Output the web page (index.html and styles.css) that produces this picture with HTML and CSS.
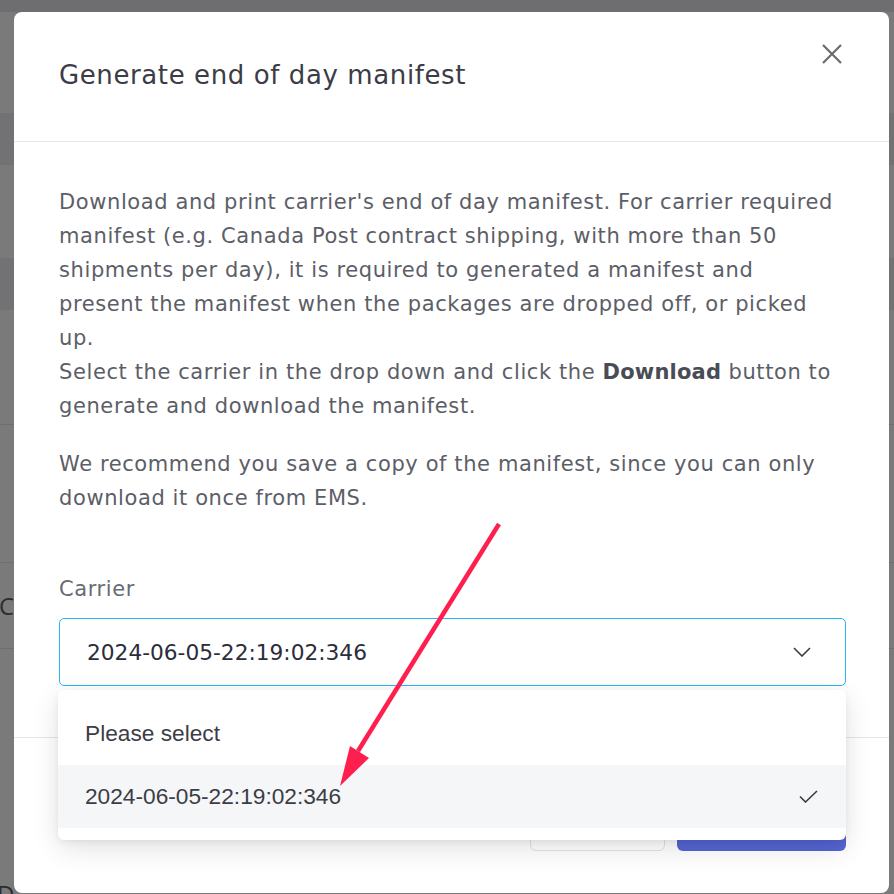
FILE: index.html
```html
<!DOCTYPE html>
<html lang="en">
<head>
    <meta charset="UTF-8">
    <meta name="viewport" content="width=device-width, initial-scale=1.0">
    <title>Generate end of day manifest</title>
    <link rel="stylesheet" href="styles.css">
</head>
<body>
    <div class="backdrop">
        <div class="band band-top"></div>
        <div class="band band-a"></div>
        <div class="band band-dark"></div>
        <div class="band band-b"></div>
        <div class="band band-dark"></div>
        <div class="band band-c line"></div>
        <div class="band band-d line"></div>
        <div class="band band-e line"><span class="peek">C</span></div>
        <div class="band band-f"><span class="peek peek-bottom">D</span></div>
    </div>

    <div class="modal">
        <div class="modal-header">
            <h2 class="modal-title">Generate end of day manifest</h2>
            <button class="modal-close" aria-label="Close">
                <svg width="24" height="24" viewBox="0 0 24 24"><path d="M3 3L21 21M21 3L3 21" stroke="#6b6b6e" stroke-width="2.2" fill="none"/></svg>
            </button>
        </div>

        <div class="modal-body">
            <p>Download and print carrier's end of day manifest. For carrier required manifest (e.g. Canada Post contract shipping, with more than 50 shipments per day), it is required to generated a manifest and present the manifest when the packages are dropped off, or picked up.<br>Select the carrier in the drop down and click the <strong>Download</strong> button to generate and download the manifest.</p>
            <p>We recommend you save a copy of the manifest, since you can only download it once from EMS.</p>

            <div class="field">
                <label class="field-label">Carrier</label>
                <div class="select-wrap">
                    <div class="select">
                        <span class="select-value">2024-06-05-22:19:02:346</span>
                        <svg width="18" height="10" viewBox="0 0 18 10"><path d="M1 1L9 9L17 1" stroke="#3a3b45" stroke-width="1.6" fill="none"/></svg>
                    </div>
                    <ul class="dropdown">
                        <li class="option">Please select</li>
                        <li class="option selected">
                            <span>2024-06-05-22:19:02:346</span>
                            <svg width="19" height="13" viewBox="0 0 19 13"><path d="M1 6.5L6.5 12L18 1" stroke="#3a3b45" stroke-width="1.6" fill="none"/></svg>
                        </li>
                    </ul>
                </div>
            </div>
        </div>

        <div class="modal-footer">
            <button class="btn btn-light">Cancel</button>
            <button class="btn btn-primary">Download</button>
        </div>
    </div>

    <svg class="annotation" width="894" height="894" viewBox="0 0 894 894">
        <line x1="499" y1="524" x2="358" y2="751" stroke="#ff1f4f" stroke-width="4.5"/>
        <polygon points="340,786 350,746 369,758" fill="#ff1f4f"/>
    </svg>
</body>
</html>
```

FILE: styles.css
```css
* {
    box-sizing: border-box;
}

body {
    margin: 0;
    width: 894px;
    height: 894px;
    overflow: hidden;
    position: relative;
    font-family: "DejaVu Sans", "Open Sans", sans-serif;
    background-color: #7a7a7a;
}

/* page behind the overlay */
.backdrop {
    display: flex;
    flex-direction: column;
    height: 894px;
}

.band {
    background-color: #7a7a7a;
}

.band-top { height: 12px; background-color: #6e6e70; }
.band-a { height: 101px; }
.band-dark { height: 52px; background-color: #727275; }
.band-b { height: 93px; }
.band-c { height: 115px; }
.band-d { height: 138px; }
.band-e { height: 86px; display: flex; align-items: center; }
.band-f { flex: 1; position: relative; }

.line {
    border-bottom: 1px solid #6f6f71;
}

.peek {
    font-family: "Open Sans", sans-serif;
    font-size: 24px;
    color: #2c2c31;
    margin-left: -1px;
}

.peek-bottom {
    position: absolute;
    left: -2px;
    bottom: -16px;
}

/* modal */
.modal {
    position: absolute;
    top: 12px;
    left: 14px;
    width: 875px;
    height: 881px;
    background-color: #fff;
    border-radius: 8px;
}

.modal-header {
    display: flex;
    justify-content: space-between;
    align-items: flex-start;
    height: 130px;
    padding: 46px 45px 0 45px;
    border-bottom: 1px solid #e6e7ea;
}

.modal-title {
    margin: 0;
    font-size: 26px;
    font-weight: 400;
    letter-spacing: 0.6px;
    line-height: 34px;
    color: #3b3c46;
}

.modal-close {
    margin-top: -16px;
    width: 24px;
    height: 24px;
    padding: 0;
    border: none;
    background: none;
}

.modal-close svg {
    display: block;
}

.modal-body {
    padding: 43px 43px 51px 45px;
    border-bottom: 1px solid #e6e7ea;
}

.modal-body p {
    max-width: 780px;
    margin: 0 0 24px 0;
    font-size: 21px;
    letter-spacing: 0.6px;
    line-height: 34px;
    color: #5c5e67;
}

.modal-body strong {
    font-weight: 700;
    letter-spacing: 0.2px;
    color: #4a4c55;
}

.field {
    padding-top: 33px;
}

.field-label {
    display: block;
    font-size: 21px;
    letter-spacing: 0.6px;
    line-height: 34px;
    color: #696b73;
    margin-bottom: 12px;
}

.select-wrap {
    position: relative;
}

.select {
    display: flex;
    justify-content: space-between;
    align-items: center;
    height: 68px;
    padding: 0 34px 0 27px;
    border: 1px solid #2ab6f5;
    border-radius: 5px;
}

.select-value {
    font-size: 21.7px;
    color: #2b2d3a;
}

.dropdown {
    position: absolute;
    top: calc(100% + 4px);
    left: -1px;
    right: 0;
    margin: 0;
    padding: 12px 0;
    list-style: none;
    background-color: #fff;
    border-radius: 6px;
    box-shadow: 0 8px 28px rgba(0, 0, 0, 0.12), 0 2px 6px rgba(0, 0, 0, 0.06);
    z-index: 2;
}

.option {
    display: flex;
    justify-content: space-between;
    align-items: center;
    height: 63px;
    padding: 0 28px 0 27px;
    font-family: "Liberation Sans", Arial, sans-serif;
    font-size: 22.7px;
    color: #3c3d45;
}

.option.selected {
    background-color: #f5f6f8;
}

.modal-footer {
    display: flex;
    justify-content: flex-end;
    gap: 12px;
    padding: 63px 43px 0 0;
}

.btn {
    height: 50px;
    border-radius: 6px;
    font-family: "Open Sans", sans-serif;
    font-size: 18px;
}

.btn-light {
    width: 135px;
    background-color: #fff;
    border: 1px solid #e1e2e8;
    color: #3b3c46;
}

.btn-primary {
    width: 169px;
    background-color: #5565d3;
    border: none;
    color: #fff;
}

.annotation {
    position: absolute;
    top: 0;
    left: 0;
    pointer-events: none;
    z-index: 5;
}
```
